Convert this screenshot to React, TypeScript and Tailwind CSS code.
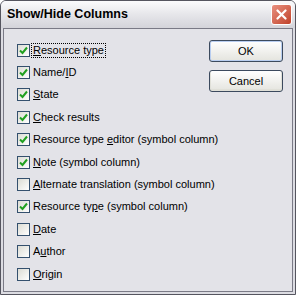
import React from 'react'

const items = [
  { pre: '', key: 'R', post: 'esource type', on: true, focus: true },
  { pre: 'Name/', key: 'I', post: 'D', on: true },
  { pre: '', key: 'S', post: 'tate', on: true },
  { pre: '', key: 'C', post: 'heck results', on: true },
  { pre: 'Resource type ', key: 'e', post: 'ditor (symbol column)', on: true },
  { pre: '', key: 'N', post: 'ote (symbol column)', on: true },
  { pre: '', key: 'A', post: 'lternate translation (symbol column)', on: false },
  { pre: 'Resource ty', key: 'p', post: 'e (symbol column)', on: true },
  { pre: '', key: 'D', post: 'ate', on: false },
  { pre: 'A', key: 'u', post: 'thor', on: false },
  { pre: '', key: 'O', post: 'rigin', on: false },
]

const Check = ({ on }: { on: boolean }) => (
  <div className="w-[13px] h-[13px] shrink-0 border border-[#34506e] bg-gradient-to-br from-[#dcdcd4] to-white flex items-center justify-center">
    {on && (
      <svg width="9" height="9" viewBox="0 0 9 9">
        <polyline points="1,4.5 3.5,7 8,1.5" fill="none" stroke="#21a121" strokeWidth="2" />
      </svg>
    )}
  </div>
)

const Button = ({ label, primary }: { label: string; primary?: boolean }) => (
  <button
    className={
      'w-[74px] h-[22px] rounded-[3px] border border-[#3c4a5e] bg-gradient-to-b from-white to-[#e4e4de] text-[11px] text-black ' +
      (primary ? 'shadow-[inset_0_0_0_1px_#b8cdf0]' : 'shadow-[inset_0_-1px_0_1px_#e0e0d8]')
    }
  >
    {label}
  </button>
)

export default function App() {
  return (
    <div
      className="w-[296px] h-[295px] flex flex-col border border-[#55555f] rounded-t-[6px] bg-[#dcdce2] overflow-hidden"
      style={{ fontFamily: '"Liberation Sans", Arial, sans-serif' }}
    >
      <div className="h-[27px] flex items-center justify-between pl-[6px] pr-[3px] bg-gradient-to-b from-[#fbfbfc] via-[#e6e6ea] to-[#d4d4da]">
        <span className="text-[12.5px] font-bold text-black">Show/Hide Columns</span>
        <div className="w-[21px] h-[21px] rounded-[3px] border border-white bg-gradient-to-br from-[#e89080] to-[#c04028] flex items-center justify-center">
          <svg width="11" height="11" viewBox="0 0 11 11">
            <path d="M1.5 1.5 L9.5 9.5 M9.5 1.5 L1.5 9.5" stroke="white" strokeWidth="2.2" strokeLinecap="round" />
          </svg>
        </div>
      </div>
      <div className="flex-1 flex px-[2px] pb-[2px]">
        <div className="flex-1 min-w-0 flex border border-[#7a7a86] bg-[#e3e3e8]">
          <div className="flex-1 min-w-0 flex flex-col pl-[13px] pt-[10px]">
            {items.map((it, i) => (
              <div key={i} className="h-[22.4px] flex items-center gap-[2px] text-[11px] text-black whitespace-nowrap">
                <Check on={it.on} />
                <span className={'px-[1px] leading-[13px] ' + (it.focus ? 'outline outline-1 outline-dotted outline-black' : '')}>
                  {it.pre}
                  <span className="underline">{it.key}</span>
                  {it.post}
                </span>
              </div>
            ))}
          </div>
          <div className="shrink-0 flex flex-col gap-[8px] pt-[11px] pr-[9px]">
            <Button label="OK" primary />
            <Button label="Cancel" />
          </div>
        </div>
      </div>
    </div>
  )
}
